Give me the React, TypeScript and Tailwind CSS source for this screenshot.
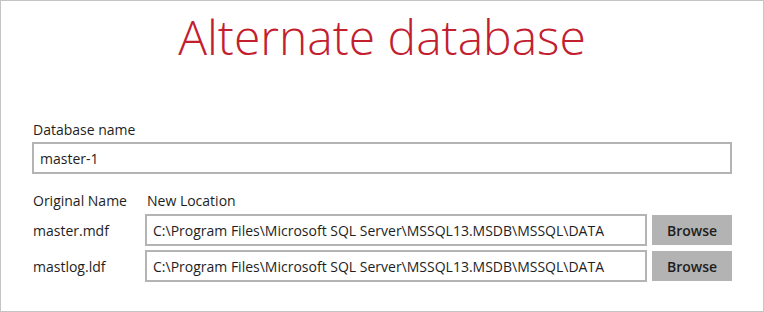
import React from "react";

const files = [
  { name: "master.mdf", path: "C:\\Program Files\\Microsoft SQL Server\\MSSQL13.MSDB\\MSSQL\\DATA" },
  { name: "mastlog.ldf", path: "C:\\Program Files\\Microsoft SQL Server\\MSSQL13.MSDB\\MSSQL\\DATA" },
];

function App() {
  return (
    <div
      className="w-[764px] h-[312px] border border-[#c4c4c4] bg-white text-[#1e1e1e]"
      style={{ fontFamily: '"Open Sans", sans-serif' }}
    >
      {/* Title */}
      <h1 className="text-center text-[48px] font-light leading-none text-[#c3202f] pt-[12px]">
        Alternate database
      </h1>

      <div className="px-[31px] pt-[59px] text-[14px]">
        {/* Database name */}
        <div className="pl-px leading-[19px]">Database name</div>
        <input
          className="mt-[3px] w-full h-[32px] border-2 border-[#b4b4b4] px-[6px] outline-none text-[14px]"
          defaultValue="master-1"
        />

        {/* File locations */}
        <div className="mt-[17px] flex leading-[19px]">
          <div className="w-[113px] pl-px">Original Name</div>
          <div className="pl-[2px]">New Location</div>
        </div>
        <div className="mt-[4px] flex flex-col gap-[4px]">
          {files.map((f) => (
            <div key={f.name} className="flex items-center">
              <div className="w-[113px] pl-px">{f.name}</div>
              <input
                className="w-[502px] h-[32px] border-2 border-[#b4b4b4] px-[6px] outline-none text-[14px]"
                defaultValue={f.path}
              />
              <button className="ml-[5px] w-[80px] h-[30px] bg-[#b3b3b3] text-[14px] font-semibold text-[#1e1e1e]">
                Browse
              </button>
            </div>
          ))}
        </div>
      </div>
    </div>
  );
}

export default App;
